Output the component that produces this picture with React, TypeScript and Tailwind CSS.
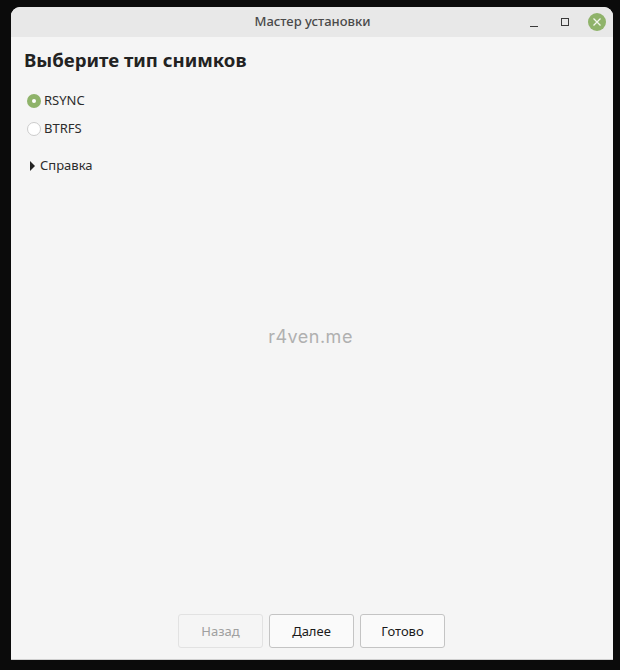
import React from "react";

function Btn({ label, disabled }: { label: string; disabled?: boolean }) {
  return (
    <div
      className={
        disabled
          ? "w-[85px] h-[34px] pt-[1px] flex items-center justify-center rounded-[3px] border border-[#e2e2e2] bg-[#f5f5f5] text-[#a0a0a0] text-[13px] font-normal"
          : "w-[85px] h-[34px] pt-[1px] flex items-center justify-center rounded-[3px] border border-[#c4c4c4] bg-[#fafafa] text-[#1a1a1a] text-[13px] font-normal"
      }
    >
      {label}
    </div>
  );
}

export default function App() {
  return (
    <div className="w-[620px] h-[670px] bg-[#0b0b0b] pt-[7px] pl-[11px] overflow-hidden font-['Noto_Sans',sans-serif]">
      <div className="relative w-[602px] h-[653px] bg-[#f5f5f5] rounded-t-[9px] border-b border-[#cfcfcf] flex flex-col overflow-hidden">
        <div className="relative h-[30px] shrink-0 bg-[#e8e8e8] flex items-center justify-center">
          <span className="text-[13px] font-medium text-[#4a4a4a] pl-[1px]">Мастер установки</span>
          <div className="absolute right-[7px] top-[6px] flex items-center">
            <svg width="10" height="10" viewBox="0 0 10 10" className="mr-[21px] mt-[2px]">
              <path d="M1 8.5h8" stroke="#3a3a3a" strokeWidth="1" />
            </svg>
            <svg width="10" height="10" viewBox="0 0 10 10" className="mr-[18px]">
              <rect x="1.5" y="1.5" width="7" height="7" fill="none" stroke="#3a3a3a" strokeWidth="1" />
            </svg>
            <svg width="18" height="18" viewBox="0 0 18 18">
              <circle cx="9" cy="9" r="9" fill="#8fb36a" />
              <path d="M5.5 5.5l7 7M12.5 5.5l-7 7" stroke="#f3f6ee" strokeWidth="1.3" />
            </svg>
          </div>
        </div>
        <div className="flex-1 flex flex-col pl-[13px] pt-[10px]">
          <h1 className="text-[18.6px] leading-[26px] font-bold text-[#222222]">Выберите тип снимков</h1>
          <div className="mt-[14px] flex items-center h-[28px] pl-[3px] gap-[3px]">
            <span className="w-[14px] h-[14px] rounded-full bg-[#8fb36a] flex items-center justify-center">
              <span className="w-[4px] h-[4px] rounded-full bg-white" />
            </span>
            <span className="text-[13px] text-[#2c2c2c]">RSYNC</span>
          </div>
          <div className="flex items-center h-[28px] pl-[3px] gap-[3px]">
            <span className="w-[14px] h-[14px] rounded-full bg-white border border-[#cccccc]" />
            <span className="text-[13px] text-[#2c2c2c]">BTRFS</span>
          </div>
          <div className="mt-[9px] flex items-center h-[28px] pl-[6px] gap-[5px]">
            <svg width="5" height="10" viewBox="0 0 5 10">
              <path d="M0 0l5 5-5 5z" fill="#222222" />
            </svg>
            <span className="text-[13px] text-[#2c2c2c]">Справка</span>
          </div>
        </div>
        <div className="absolute left-0 right-[3px] top-[318px] text-center text-[18px] leading-[24px] tracking-[0.5px] font-['Inter',sans-serif] text-[#b0b0b0]">
          r4ven.me
        </div>
        <div className="flex justify-center gap-[6px] pb-[11px] pr-[1px]">
          <Btn label="Назад" disabled />
          <Btn label="Далее" />
          <Btn label="Готово" />
        </div>
      </div>
    </div>
  );
}
